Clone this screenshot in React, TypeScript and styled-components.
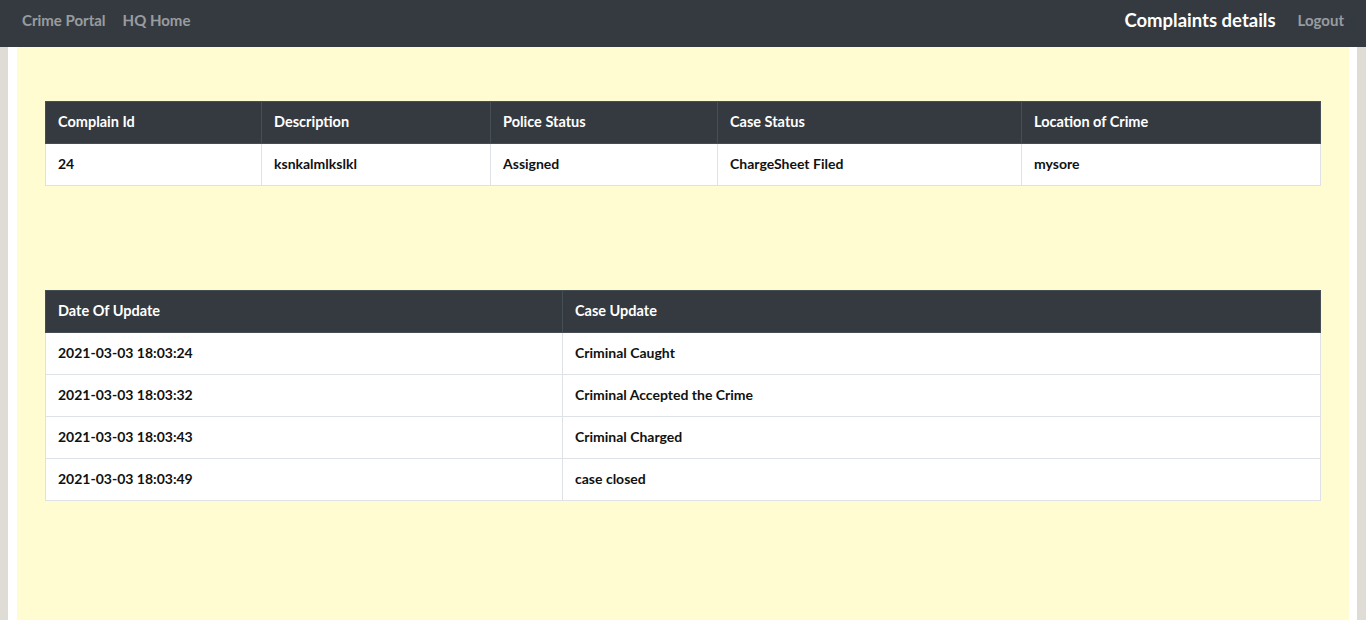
import React from "react";
import styled, { createGlobalStyle } from "styled-components";

const GlobalStyle = createGlobalStyle`
	html, body {
		margin: 0;
		padding: 0;
		background: #dedcd4;
		font-family: "Lato", "Open Sans", sans-serif;
	}
	* {
		box-sizing: border-box;
	}
`;

const Navbar = styled.nav`
	height: 47px;
	background: #343a40;
	display: flex;
	align-items: center;
	justify-content: space-between;
	padding: 0 22px 7px 22px;
`;

const NavGroup = styled.div`
	display: flex;
	align-items: center;
	gap: 17px;
`;

const NavLink = styled.a`
	color: rgba(255, 255, 255, 0.5);
	font-weight: 700;
	font-size: 15px;
	text-decoration: none;
	cursor: pointer;
`;

const Brand = styled.span`
	color: #fff;
	font-weight: 700;
	font-size: 18.5px;
	margin-right: 5px;
`;

const Frame = styled.div`
	margin: 0 9px 0 8px;
	border-left: 9px solid #fff;
	border-right: 8px solid #fff;
	background: #fffcd2;
	min-height: 573px;
	padding: 54px 28px 60px 28px;
	display: flex;
	flex-direction: column;
	gap: 104px;
`;

const Table = styled.table`
	width: 100%;
	border-collapse: collapse;
	background: #fff;
	font-size: 14px;
	font-weight: 700;
`;

const Th = styled.th<{ w?: number }>`
	background: #343a40;
	color: #fff;
	text-align: left;
	height: 42px;
	padding: 0 12px 3px 12px;
	border: 1px solid #454d55;
	font-size: 14.5px;
	width: ${p => (p.w ? p.w + "px" : "auto")};
`;

const Td = styled.td`
	color: #111;
	height: 42px;
	padding: 0 12px 3px 12px;
	border: 1px solid #dee2e6;
`;

const complaint = {
	id: "24",
	description: "ksnkalmlkslkl",
	police: "Assigned",
	status: "ChargeSheet Filed",
	location: "mysore",
};

const updates = [
	{ date: "2021-03-03 18:03:24", text: "Criminal Caught" },
	{ date: "2021-03-03 18:03:32", text: "Criminal Accepted the Crime" },
	{ date: "2021-03-03 18:03:43", text: "Criminal Charged" },
	{ date: "2021-03-03 18:03:49", text: "case closed" },
];

export default function App() {
	return (
		<>
			<GlobalStyle />
			<Navbar>
				<NavGroup>
					<NavLink>Crime Portal</NavLink>
					<NavLink>HQ Home</NavLink>
				</NavGroup>
				<NavGroup>
					<Brand>Complaints details</Brand>
					<NavLink>Logout</NavLink>
				</NavGroup>
			</Navbar>
			<Frame>
				<Table>
					<thead>
						<tr>
							<Th w={216}>Complain Id</Th>
							<Th w={229}>Description</Th>
							<Th w={227}>Police Status</Th>
							<Th w={304}>Case Status</Th>
							<Th>Location of Crime</Th>
						</tr>
					</thead>
					<tbody>
						<tr>
							<Td>{complaint.id}</Td>
							<Td>{complaint.description}</Td>
							<Td>{complaint.police}</Td>
							<Td>{complaint.status}</Td>
							<Td>{complaint.location}</Td>
						</tr>
					</tbody>
				</Table>
				<Table>
					<thead>
						<tr>
							<Th w={517}>Date Of Update</Th>
							<Th>Case Update</Th>
						</tr>
					</thead>
					<tbody>
						{updates.map(u => (
							<tr key={u.date}>
								<Td>{u.date}</Td>
								<Td>{u.text}</Td>
							</tr>
						))}
					</tbody>
				</Table>
			</Frame>
		</>
	);
}
